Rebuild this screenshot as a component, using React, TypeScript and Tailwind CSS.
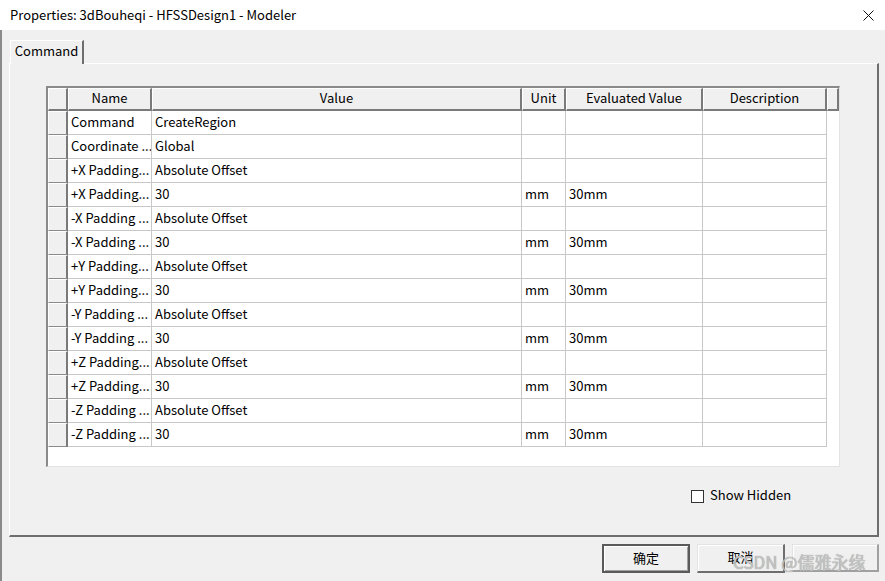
import React from 'react';

type Row = { name: string; value: string; unit?: string; evaluated?: string };

const rows: Row[] = [
  { name: 'Command', value: 'CreateRegion' },
  { name: 'Coordinate ...', value: 'Global' },
  { name: '+X Padding...', value: 'Absolute Offset' },
  { name: '+X Padding...', value: '30', unit: 'mm', evaluated: '30mm' },
  { name: '-X Padding ...', value: 'Absolute Offset' },
  { name: '-X Padding ...', value: '30', unit: 'mm', evaluated: '30mm' },
  { name: '+Y Padding...', value: 'Absolute Offset' },
  { name: '+Y Padding...', value: '30', unit: 'mm', evaluated: '30mm' },
  { name: '-Y Padding ...', value: 'Absolute Offset' },
  { name: '-Y Padding ...', value: '30', unit: 'mm', evaluated: '30mm' },
  { name: '+Z Padding...', value: 'Absolute Offset' },
  { name: '+Z Padding...', value: '30', unit: 'mm', evaluated: '30mm' },
  { name: '-Z Padding ...', value: 'Absolute Offset' },
  { name: '-Z Padding ...', value: '30', unit: 'mm', evaluated: '30mm' },
];

// header cell: raised 3d look
const headCell =
  'h-full flex items-center justify-center pb-[2px] bg-[#f0f0f0] border-t border-l border-t-white border-l-white border-r-2 border-b-2 border-r-[#7a7a7a] border-b-[#7a7a7a]';
const dataCell =
  'h-full flex items-center pl-[3px] pb-[2px] border-r border-b border-[#c8c8c8] whitespace-nowrap overflow-hidden';

function Grid() {
  return (
    <div className="w-[794px] h-[381px] bg-white border-t-2 border-l-2 border-r border-b border-t-[#8a8a8a] border-l-[#8a8a8a] border-r-[#e3e3e3] border-b-[#e3e3e3] flex flex-col">
      {/* header */}
      <div className="flex h-[23px]">
        <div className={`${headCell} w-[20px]`} />
        <div className={`${headCell} w-[84px]`}>Name</div>
        <div className={`${headCell} w-[370px]`}>Value</div>
        <div className={`${headCell} w-[44px]`}>Unit</div>
        <div className={`${headCell} w-[137px]`}>Evaluated Value</div>
        <div className={`${headCell} w-[124px]`}>Description</div>
        <div className={`${headCell} flex-1`} />
      </div>
      {rows.map((r, i) => (
        <div key={i} className="flex h-[24px]">
          <div className="w-[20px] h-full bg-[#f0f0f0] border-t border-l border-t-white border-l-white border-r-2 border-b border-r-[#7a7a7a] border-b-[#8a8a8a]" />
          <div className={`${dataCell} w-[84px]`}>{r.name}</div>
          <div className={`${dataCell} w-[370px]`}>{r.value}</div>
          <div className={`${dataCell} w-[44px]`}>{r.unit}</div>
          <div className={`${dataCell} w-[137px]`}>{r.evaluated}</div>
          <div className={`${dataCell} w-[124px]`} />
        </div>
      ))}
    </div>
  );
}

export default function App() {
  return (
    <div
      className="relative w-[885px] h-[581px] overflow-hidden bg-[#f0f0f0] flex flex-col text-[13px] text-black"
      style={{ fontFamily: '"Noto Sans CJK SC", "Noto Sans", sans-serif' }}
    >
      {/* title bar */}
      <div className="h-[30px] bg-white flex items-center justify-between pl-[10px] pr-[10px]">
        <span>Properties: 3dBouheqi - HFSSDesign1 - Modeler</span>
        <svg width="11" height="11" viewBox="0 0 11 11" className="mr-[1px]">
          <path d="M0.5 0.5 L10.5 10.5 M10.5 0.5 L0.5 10.5" stroke="#111" strokeWidth="1" />
        </svg>
      </div>

      <div className="flex-1 flex flex-col border-l-2 border-l-[#8a8a8a] pl-[7px] pt-[10px]">
        {/* tab strip */}
        <div className="flex">
          <div className="relative z-10 ml-[1px] -mb-px h-[24px] w-[74px] pb-[3px] bg-[#f0f0f0] flex items-center justify-center border-t border-l border-t-white border-l-white border-r-2 border-r-[#6e6e6e]">
            Command
          </div>
        </div>

        {/* tab panel */}
        <div className="w-[870px] h-[474px] flex flex-col border-t border-l border-t-white border-l-white border-r-2 border-b-2 border-r-[#6e6e6e] border-b-[#6e6e6e] pl-[36px] pt-[22px]">
          <Grid />
          <div className="flex items-center pl-[645px] mt-[18px]">
            <div className="w-[13px] h-[13px] bg-white border border-[#333]" />
            <span className="ml-[6px] pb-[3px]">Show Hidden</span>
          </div>
        </div>

        {/* dialog buttons */}
        <div className="flex justify-start gap-[7px] pl-[593px] mt-[7px]">
          <div className="w-[88px] h-[29px] pb-[2px] flex items-center justify-center border-2 border-[#5a5a5a] shadow-[inset_1px_1px_0_#ffffff,inset_-1px_-1px_0_#a0a0a0]">
            确定
          </div>
          <div className="w-[88px] h-[29px] pb-[2px] flex items-center justify-center border-t border-l border-t-[#e3e3e3] border-l-[#e3e3e3] border-r-2 border-b-2 border-r-[#6e6e6e] border-b-[#6e6e6e] shadow-[inset_1px_1px_0_#ffffff]">
            取消
          </div>
          <div className="w-[87px] h-[28px] flex items-center justify-center border-t border-l border-t-[#e3e3e3] border-l-[#e3e3e3] border-r-2 border-b-2 border-r-[#a0a0a0] border-b-[#a0a0a0] shadow-[inset_1px_1px_0_#ffffff]" />
        </div>
      </div>

      {/* watermark */}
      <div className="absolute left-[733px] top-[549px] text-[17px] text-[#c4c4c4] [text-shadow:0_0_1px_#8a8a8a] whitespace-nowrap">
        CSDN @儒雅永缘
      </div>
    </div>
  );
}
